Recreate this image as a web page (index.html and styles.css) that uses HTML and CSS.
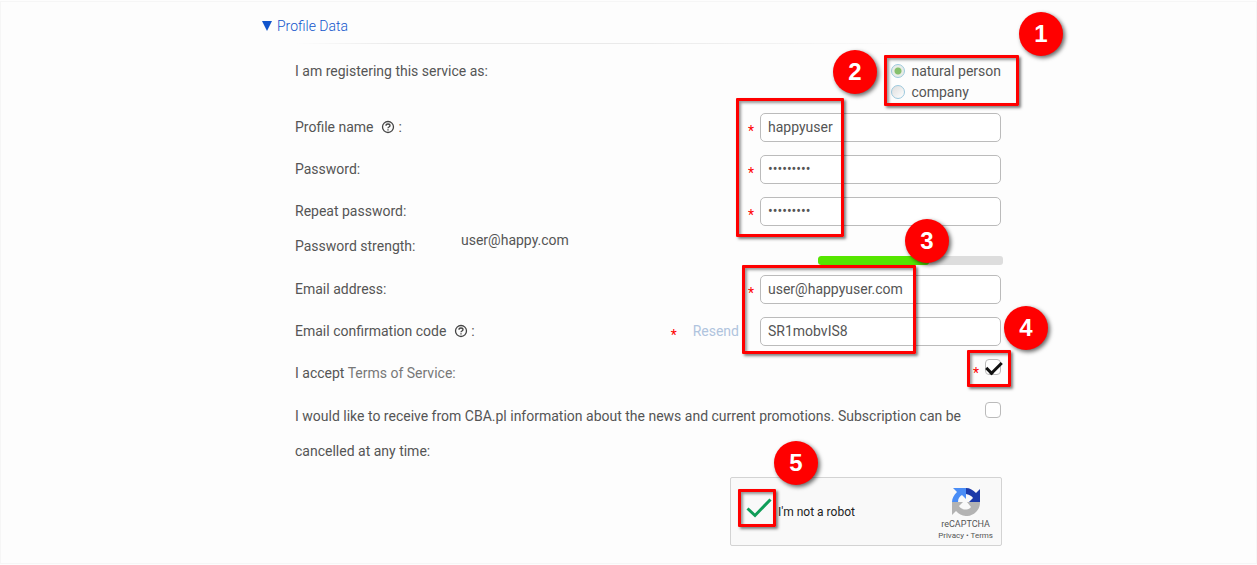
FILE: index.html
```
<!DOCTYPE html>
<html lang="en">
<head>
  <meta charset="UTF-8" />
  <meta name="viewport" content="width=device-width, initial-scale=1.0"/>
  <title>Profile Data</title>
  <link rel="stylesheet" href="styles.css">
</head>

<body>
  <main class="panel">
    <form class="profile">
      <h2><a href="#profile"><span class="arrow"></span>Profile Data</a></h2>

      <div class="rows" id="profile">
        <div class="row type">
          <span>I am registering this service as:</span>
          <div class="radios">
            <label><input type="radio" name="type" checked /> natural person</label>
            <label><input type="radio" name="type" /> company</label>
          </div>
        </div>

        <div class="row">
          <label for="name">Profile name
            <svg class="help" viewBox="0 0 14 14"><circle cx="7" cy="7" r="5.5"/><path d="M5 5.7C5 3.4 9 3.4 9 5.7 9 7 7 7 7 8.2M7 9.2v1.3"/></svg> :</label>
          <div class="field"><span class="req">*</span><input type="text" id="name" value="happyuser" /></div>
        </div>
        <div class="row">
          <label for="pass">Password:</label>
          <div class="field"><span class="req">*</span><input type="password" id="pass" value="happyuser" /></div>
        </div>
        <div class="row">
          <label for="repeat">Repeat password:</label>
          <div class="field"><span class="req">*</span><input type="password" id="repeat" value="happyuser" /></div>
        </div>

        <div class="row strength">
          <span class="name">Password strength:</span>
          <span class="mail">user@happy.com</span>
          <div class="meter"><div class="level"></div></div>
        </div>

        <div class="row">
          <label for="email">Email address:</label>
          <div class="field"><span class="req">*</span><input type="text" id="email" value="user@happyuser.com" /></div>
        </div>
        <div class="row">
          <label for="code">Email confirmation code
            <svg class="help" viewBox="0 0 14 14"><circle cx="7" cy="7" r="5.5"/><path d="M5 5.7C5 3.4 9 3.4 9 5.7 9 7 7 7 7 8.2M7 9.2v1.3"/></svg> :</label>
          <div class="field"><span class="req">*</span><a class="resend" href="#resend">Resend</a><input type="text" id="code" value="SR1mobvIS8" /></div>
        </div>

        <div class="row">
          <label for="terms">I accept <a href="#terms">Terms of Service:</a></label>
          <div class="field tick"><span class="req">*</span><input type="checkbox" id="terms" checked /></div>
        </div>
        <div class="row news">
          <label for="news">I would like to receive from CBA.pl information about the news and current promotions. Subscription can be cancelled at any time:</label>
          <div class="field tick"><input type="checkbox" id="news" /></div>
        </div>

        <div class="captcha">
          <svg class="done" viewBox="0 0 26 20"><path d="M1.500 10.500L9 17.500 24.500 1.500"/></svg>
          <span class="robot">I'm not a robot</span>
          <div class="brand">
            <svg viewBox="0 0 28 28">
              <path fill="#1c3aa9" d="M28 1v13H17l4-4c-1-2-3-3-7-4V0c4 0 7 2 10 5z"/>
              <path fill="#4a8df6" d="M1 0h13v11l-4-4c-2 1-4 3-4 7H0c0-4 2-7 5-10z"/>
              <path fill="#b3b3b3" d="M0 14h11l-4 4c2 4 9 5 12 1l-4-5h13c0 4-1 7-4 10-6 6-15 5-20-1l-4 4z"/>
            </svg>
            <span class="title">reCAPTCHA</span>
            <span class="links"><a href="#privacy">Privacy</a> • <a href="#tos">Terms</a></span>
          </div>
        </div>
      </div>

      <span class="box box-type"></span>
      <span class="box box-login"></span>
      <span class="box box-email"></span>
      <span class="box box-terms"></span>
      <span class="box box-robot"></span>
      <span class="step step1">1</span>
      <span class="step step2">2</span>
      <span class="step step3">3</span>
      <span class="step step4">4</span>
      <span class="step step5">5</span>
    </form>
  </main>
</body>
</html>
```

FILE: styles.css
```
* {
  box-sizing: border-box;
}

body {
  margin: 0;
  padding: 1px 0;
  background: #fdfdfd;
  font-family: Roboto, sans-serif;
  font-size: 14px;
  color: #555;
}

.panel {
  border: 1px solid #f6f6f6;
  padding: 0 8px 17px;
}

.profile {
  position: relative;
  max-width: 749px;
  margin: 0 auto;
}

a {
  color: inherit;
  text-decoration: none;
}

h2 {
  margin: 0;
  padding: 14px 0 7px 8px;
  font-size: 14px;
  line-height: 20px;
  font-weight: 300;
  color: #1155cc;
}

.arrow {
  display: inline-block;
  margin-right: 5px;
  border: 5px solid transparent;
  border-top: 10px solid #1155cc;
  border-bottom: 0;
}

.rows {
  margin-left: 41px;
}

.rows::before {
  content: "";
  display: block;
  height: 1px;
  margin-right: 40px;
  background: linear-gradient(to right, #fdfdfd, #eaeaea 15%, #eaeaea 50%, #fdfdfd);
}

.row {
  display: flex;
  justify-content: space-between;
  align-items: center;
  height: 42px;
  padding-right: 2px;
}

.type {
  height: 62px;
  align-items: flex-start;
  padding-top: 17px;
  line-height: 21px;
}

.radios {
  display: flex;
  flex-direction: column;
}

.radios label {
  display: flex;
  align-items: center;
  gap: 6px;
}

.radios input {
  appearance: none;
  width: 14px;
  height: 14px;
  margin: 0 0 2px;
  border: 1px solid #9cc9dd;
  border-radius: 50%;
  background: linear-gradient(135deg, #ddd, #fff);
}

.radios input:checked {
  background: radial-gradient(circle, #86c06c 0 3px, #e8ece8 4px);
}

.help {
  width: 14px;
  height: 14px;
  margin-left: 4px;
  vertical-align: -2px;
  fill: none;
  stroke: #444;
  stroke-width: 1.3;
}

.field {
  display: flex;
  align-items: center;
}

.req {
  margin-right: 6px;
  padding-top: 8px;
  color: #f00;
}

.resend {
  margin: 0 21px 0 10px;
  color: #b0c4de;
}

.field input[type="text"],
.field input[type="password"] {
  width: 241px;
  height: 29px;
  padding: 0 7px;
  border: 1px solid #bbb;
  border-radius: 5px;
  background: #fff;
  font: inherit;
  color: #555;
}

.strength {
  height: 36px;
  padding-right: 0;
}

.strength .name {
  width: 166px;
  padding-bottom: 8px;
}

.mail {
  flex: 1;
  padding-bottom: 20px;
}

.meter {
  align-self: flex-end;
  width: 185px;
  height: 9px;
  margin-bottom: 3px;
  border-radius: 3px;
  background: #ddd;
  overflow: hidden;
}

.level {
  width: 60%;
  height: 100%;
  border-radius: 3px;
  background: #55e600;
}

.row label a {
  color: #777;
}

.tick input {
  appearance: none;
  width: 16px;
  height: 16px;
  margin: 0 0 12px;
  border: 1px solid #bbb;
  border-radius: 4px;
  background: #fff;
}

.tick input:checked::before {
  content: "";
  display: block;
  width: 13px;
  height: 6px;
  margin: 2px 0 0;
  border: solid #111;
  border-width: 0 0 3px 3px;
  transform: rotate(-45deg);
}

.tick .req {
  padding-top: 0;
}

.news {
  height: 77px;
  align-items: flex-start;
  line-height: 35px;
}

.news label {
  padding-top: 5px;
}

.news .tick {
  padding-top: 8px;
}

.captcha {
  display: flex;
  align-items: center;
  width: 272px;
  height: 69px;
  margin: 6px 1px 0 auto;
  padding: 0 8px 0 15px;
  border: 1px solid #d3d3d3;
  border-radius: 2px;
  background: #f9f9f9;
  font-size: 12px;
  color: #222;
}

.done {
  width: 26px;
  height: 20px;
  margin: 0 6px 8px 0;
  fill: none;
  stroke: #0f9d58;
  stroke-width: 3;
}

.robot {
  flex: 1;
}

.brand {
  display: flex;
  flex-direction: column;
  align-items: center;
  padding-top: 4px;
  color: #555;
}

.brand svg {
  width: 28px;
  height: 28px;
}

.title {
  font-size: 9px;
  line-height: 16px;
}

.links {
  font-size: 8px;
  line-height: 8px;
}

/* numbered callouts over the form */
.box {
  position: absolute;
  border: 3px solid #f00;
  border-radius: 1px;
  box-shadow: 2px 2px 3px rgba(0, 0, 0, 0.5), inset 2px 2px 3px rgba(0, 0, 0, 0.4);
  pointer-events: none;
}

.box-type { left: 630px; top: 53px; width: 135px; height: 51px; }
.box-login { left: 482px; top: 96px; width: 108px; height: 139px; }
.box-email { left: 488px; top: 263px; width: 174px; height: 89px; }
.box-terms { left: 713px; top: 348px; width: 44px; height: 37px; }
.box-robot { left: 484px; top: 487px; width: 38px; height: 38px; }

.step {
  position: absolute;
  width: 44px;
  height: 44px;
  border-radius: 50%;
  background: #f00;
  box-shadow: 2px 2px 4px rgba(0, 0, 0, 0.6);
  color: #fff;
  font: bold 24px/44px "Liberation Sans", sans-serif;
  text-align: center;
}

.step1 { left: 765px; top: 10px; }
.step2 { left: 579px; top: 48px; }
.step3 { left: 651px; top: 217px; }
.step4 { left: 750px; top: 304px; }
.step5 { left: 520px; top: 439px; }
```
